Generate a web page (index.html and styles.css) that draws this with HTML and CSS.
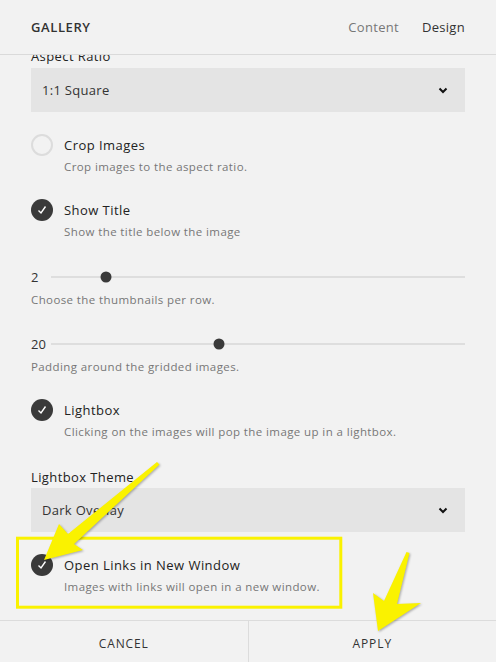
FILE: index.html
```html
<!DOCTYPE html>
<html lang="en">
<head>
    <meta charset="UTF-8">
    <meta name="viewport" content="width=device-width, initial-scale=1.0">
    <title>Gallery Settings</title>
    <link rel="stylesheet" href="styles.css">
</head>
<body>
    <div class="panel">
        <!-- header -->
        <div class="panel-head">
            <h1 class="panel-title">GALLERY</h1>
            <div class="tabs">
                <span class="tab">Content</span>
                <span class="tab active">Design</span>
            </div>
        </div>

        <!-- settings list -->
        <div class="panel-body">
            <div class="settings">
                <div class="label">Aspect Ratio</div>
                <div class="select">
                    <span>1:1 Square</span>
                    <svg class="chevron" width="10" height="7" viewBox="0 0 10 7"><polyline points="1.5,1.5 5,5 8.5,1.5" fill="none" stroke="#111" stroke-width="2"/></svg>
                </div>

                <div class="toggle first">
                    <div class="toggle-row">
                        <span class="check"></span>
                        <span class="toggle-title">Crop Images</span>
                    </div>
                    <p class="desc">Crop images to the aspect ratio.</p>
                </div>

                <div class="toggle">
                    <div class="toggle-row">
                        <span class="check on"><svg width="22" height="22" viewBox="0 0 22 22"><polyline points="7.5,11.5 10,14 14.5,7.5" fill="none" stroke="#fff" stroke-width="1.4"/></svg></span>
                        <span class="toggle-title">Show Title</span>
                    </div>
                    <p class="desc">Show the title below the image</p>
                </div>

                <div class="slider first-slider">
                    <div class="slider-row">
                        <span class="value">2</span>
                        <div class="track"><span class="thumb" style="left: 13.3%"></span></div>
                    </div>
                    <p class="desc flat">Choose the thumbnails per row.</p>
                </div>

                <div class="slider">
                    <div class="slider-row">
                        <span class="value">20</span>
                        <div class="track"><span class="thumb" style="left: 40.6%"></span></div>
                    </div>
                    <p class="desc flat">Padding around the gridded images.</p>
                </div>

                <div class="toggle">
                    <div class="toggle-row">
                        <span class="check on"><svg width="22" height="22" viewBox="0 0 22 22"><polyline points="7.5,11.5 10,14 14.5,7.5" fill="none" stroke="#fff" stroke-width="1.4"/></svg></span>
                        <span class="toggle-title">Lightbox</span>
                    </div>
                    <p class="desc">Clicking on the images will pop the image up in a lightbox.</p>
                </div>

                <div class="label theme-label">Lightbox Theme</div>
                <div class="select">
                    <span>Dark Overlay</span>
                    <svg class="chevron" width="10" height="7" viewBox="0 0 10 7"><polyline points="1.5,1.5 5,5 8.5,1.5" fill="none" stroke="#111" stroke-width="2"/></svg>
                </div>

                <div class="toggle after-select">
                    <div class="toggle-row">
                        <span class="check on"><svg width="22" height="22" viewBox="0 0 22 22"><polyline points="7.5,11.5 10,14 14.5,7.5" fill="none" stroke="#fff" stroke-width="1.4"/></svg></span>
                        <span class="toggle-title">Open Links in New Window</span>
                    </div>
                    <p class="desc">Images with links will open in a new window.</p>
                </div>
            </div>
        </div>

        <!-- footer buttons -->
        <div class="panel-foot">
            <button type="button" class="btn">CANCEL</button>
            <button type="button" class="btn">APPLY</button>
        </div>
    </div>

    <!-- yellow annotations drawn over the screenshot -->
    <svg class="marks" width="496" height="662" viewBox="0 0 496 662">
        <rect x="415" y="14.7" width="57" height="28.3" fill="none" stroke="#faf200" stroke-width="2"/>
        <rect x="17.5" y="538.2" width="323.3" height="69" fill="none" stroke="#faf200" stroke-width="3"/>
        <g class="arrows">
            <polygon points="44,560 59,524 68,534 157,462 159.5,464.5 74,544 83,550" fill="#faf200"/>
            <polygon points="378,631 373,593 384,601 406.5,552 409.5,553 397,604 421,603" fill="#faf200"/>
        </g>
    </svg>
</body>
</html>
```

FILE: styles.css
```css
*{
    margin: 0;
    padding: 0;
    box-sizing: border-box;
}
body{
    font-family: "Open Sans", sans-serif;
    background: #f2f2f2;
    color: #333;
    width: 496px;
    height: 662px;
    overflow: hidden;
}
.panel{
    display: flex;
    flex-direction: column;
    height: 662px;
}
.panel-head{
    height: 55px;
    flex-shrink: 0;
    display: flex;
    align-items: center;
    justify-content: space-between;
    padding: 0 31px;
    border-bottom: 1px solid #dadada;
    position: relative;
    z-index: 1;
    background: #f2f2f2;
}
.panel-title{
    font-size: 13px;
    font-weight: 600;
    letter-spacing: 0.6px;
    color: #333;
}
.tabs{
    display: flex;
    gap: 23px;
    font-size: 13px;
    letter-spacing: 0.3px;
}
.tab{
    color: #777;
}
.tab.active{
    color: #333;
}
.panel-body{
    flex: 1;
    overflow: hidden;
}
.settings{
    display: flex;
    flex-direction: column;
    padding: 0 31px;
    margin-top: -7px;
}
.label{
    font-size: 13px;
    line-height: 16px;
    font-weight: 500;
    letter-spacing: 0.4px;
    color: #222;
    margin-bottom: 4px;
}
.theme-label{
    margin-top: 29px;
    margin-bottom: 3px;
}
.select{
    height: 44px;
    background: #e4e4e4;
    display: flex;
    align-items: center;
    justify-content: space-between;
    padding: 0 17px 0 11px;
    font-size: 13px;
    letter-spacing: 0.3px;
}
.toggle{
    margin-top: 27px;
}
.toggle.first{
    margin-top: 25px;
}
.toggle.after-select{
    margin-top: 25px;
}
.toggle-row{
    display: flex;
    align-items: center;
    height: 16px;
}
.check{
    width: 22px;
    height: 22px;
    border-radius: 50%;
    border: 2px solid #dcdcdc;
    flex-shrink: 0;
    margin-right: 11px;
    display: flex;
}
.check.on{
    background: #3a3a3a;
    border: none;
}
.toggle-title{
    font-size: 13px;
    font-weight: 500;
    letter-spacing: 0.45px;
    color: #222;
}
.desc{
    font-size: 11.5px;
    line-height: 16px;
    letter-spacing: 0.4px;
    color: #777;
    margin-top: 6px;
    padding-left: 33px;
}
.desc.flat{
    padding-left: 0;
    margin-top: 7px;
}
.slider{
    margin-top: 28px;
}
.first-slider{
    margin-top: 29px;
}
.slider-row{
    display: flex;
    align-items: center;
    height: 16px;
}
.value{
    width: 20px;
    font-size: 13px;
}
.track{
    flex: 1;
    height: 2px;
    background: #dedede;
    position: relative;
}
.thumb{
    position: absolute;
    top: 50%;
    width: 11px;
    height: 11px;
    border-radius: 50%;
    background: #3a3a3a;
    transform: translate(-50%, -50%);
}
.panel-foot{
    height: 42px;
    flex-shrink: 0;
    display: flex;
    border-top: 1px solid #dcdcdc;
}
.btn{
    flex: 1;
    border: none;
    outline: none;
    background: #f2f2f2;
    font-family: "Open Sans", sans-serif;
    font-size: 12px;
    letter-spacing: 0.9px;
    color: #333;
    padding-top: 3px;
}
.btn + .btn{
    border-left: 1px solid #dcdcdc;
}
.marks{
    position: absolute;
    top: 0;
    left: 0;
    pointer-events: none;
}
.arrows{
    filter: drop-shadow(1px 1px 1px rgba(0,0,0,0.3));
}
```
